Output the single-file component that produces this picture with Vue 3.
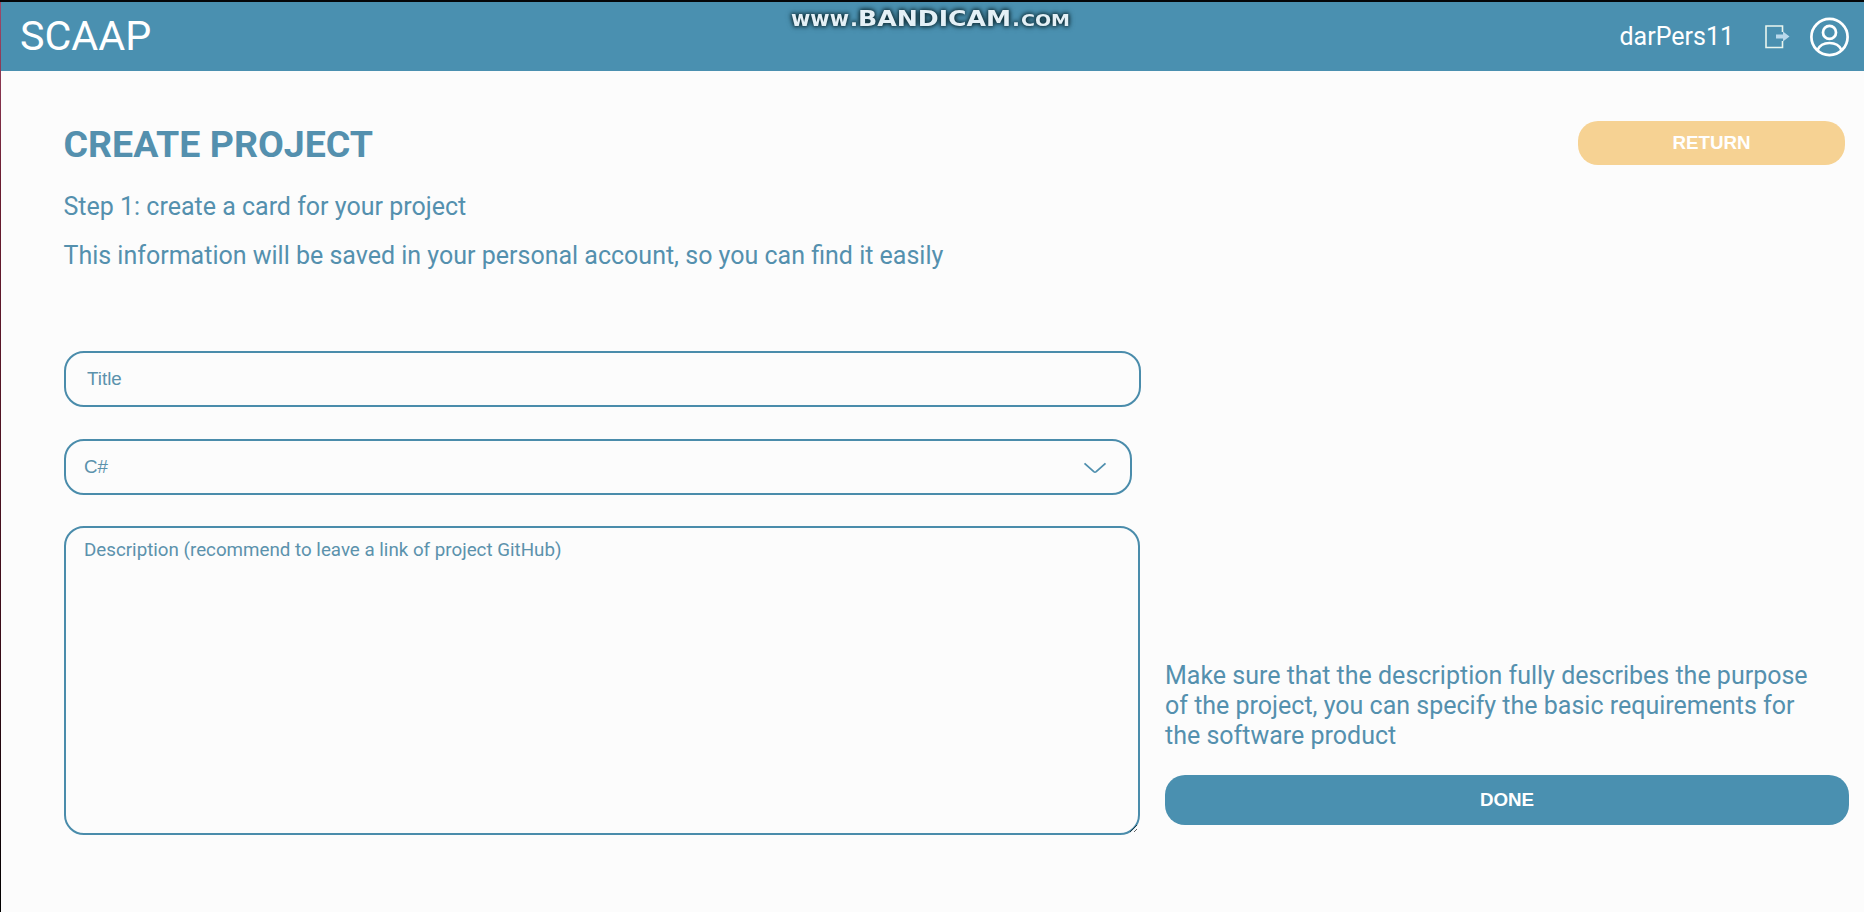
<script setup>
import { ref } from 'vue'

const title = ref('')
const language = ref('C#')
const description = ref('')
</script>

<template>
  <div class="screen">
    <header class="topbar">
      <div class="brand">SCAAP</div>
      <div class="user">
        <span class="username">darPers11</span>
        <svg class="logout" width="26" height="26" viewBox="0 0 26 26" fill="none">
          <path d="M18.500 8V2H2V23.500H18.500V17" stroke="#e9f5ee" stroke-width="1.600" />
          <path d="M12 10.500h7V7.500l6.500 5-6.500 5v-3H12z" fill="#b9d9ec" />
        </svg>
        <svg class="avatar" width="40" height="40" viewBox="0 0 40 40" fill="none" stroke="#fff" stroke-width="2.700">
          <circle cx="19.500" cy="20" r="18.100" />
          <circle cx="19.500" cy="15.400" r="6.500" />
          <path d="M7.500 33C9.500 28.500 14 26 19.500 26s10 2.500 12 7" />
        </svg>
      </div>
    </header>

    <svg class="watermark" width="300" height="34" viewBox="0 0 300 34">
      <g class="mark">
        <text x="10" y="26" font-size="22" textLength="58" lengthAdjust="spacingAndGlyphs">www</text>
        <text x="69" y="26" font-size="20" textLength="8" lengthAdjust="spacingAndGlyphs">.</text>
        <text x="77" y="26" font-size="22" textLength="153" lengthAdjust="spacingAndGlyphs">BANDICAM</text>
        <text x="231" y="26" font-size="20" textLength="8" lengthAdjust="spacingAndGlyphs">.</text>
        <text x="240" y="26" font-size="16" textLength="49" lengthAdjust="spacingAndGlyphs">COM</text>
      </g>
    </svg>

    <main class="content">
      <section class="intro">
        <div class="lead">
          <h1>CREATE PROJECT</h1>
          <p class="step">Step 1: create a card for your project</p>
          <p class="note">This information will be saved in your personal account, so you can find it easily</p>
        </div>
        <button class="return" type="button">RETURN</button>
      </section>

      <form class="form" @submit.prevent>
        <div class="fields">
          <input v-model="title" class="field title" placeholder="Title" />
          <div class="field select">
            <span>{{ language }}</span>
            <svg width="24" height="12" viewBox="0 0 24 12" fill="none" stroke="#4f8fae" stroke-width="1.800">
              <path d="M1.500 1.300 10.800 9.600q1.200 1 2.400 0l9.300-8.300" />
            </svg>
          </div>
          <textarea v-model="description" class="field description" placeholder="Description (recommend to leave a link of project GitHub)"></textarea>
        </div>
        <aside class="side">
          <p>Make sure that the description fully describes the purpose of the project, you can specify the basic requirements for the software product</p>
          <button class="done" type="submit">DONE</button>
        </aside>
      </form>
    </main>
  </div>
</template>

<style>
body {
  margin: 0;
  overflow: hidden;
}
</style>

<style scoped>
.screen {
  position: relative;
  box-sizing: border-box;
  width: 1864px;
  height: 912px;
  padding-left: 1px;
  border-top: 2px solid #050608;
  background: linear-gradient(#a04a6a, #6a1c30 20%, #3a0c18 70%, #000) 0 0 / 1px 100% no-repeat, #fcfcfc;
  color: #5490ae;
  font-family: Roboto, sans-serif;
  overflow: hidden;
}
.topbar {
  box-sizing: border-box;
  height: 69px;
  padding: 0 14px 0 19px;
  display: flex;
  align-items: center;
  justify-content: space-between;
  background: #4a90b0;
  color: #fff;
}
.brand {
  font-size: 41.250px;
  line-height: 48px;
  padding-bottom: 1px;
}
.user {
  display: flex;
  align-items: center;
}
.username {
  font-size: 25px;
  margin-right: 30px;
}
.logout {
  margin-right: 20px;
}
.watermark {
  position: absolute;
  left: 781px;
  top: -2px;
}
.mark {
  font-family: "DejaVu Sans", sans-serif;
  font-weight: bold;
  fill: #e4f0f6;
  filter: drop-shadow(0 0 2px #12343f) drop-shadow(0 0 2px #12343f);
}
.content {
  padding: 0 14px 0 63px;
}
.intro {
  height: 280px;
  display: flex;
  justify-content: space-between;
  align-items: flex-start;
}
.lead {
  margin-left: -0.500px;
}
h1 {
  margin: 51px 0 0;
  font-size: 37.500px;
  line-height: 45px;
  font-weight: 700;
}
p {
  margin: 0;
  font-size: 25px;
  line-height: 30px;
}
.step {
  margin-top: 25px;
}
.note {
  margin-top: 19px;
}
button {
  border: 0;
  padding: 0 0 1px;
  color: #fff;
  font: bold 18.750px "Liberation Sans", Arial, sans-serif;
}
.return {
  width: 267px;
  height: 44px;
  margin: 50px 5px 0 0;
  border-radius: 20px;
  background: #f6d293;
}
.form {
  display: flex;
  gap: 24px;
}
.fields {
  width: 1077px;
  display: flex;
  flex-direction: column;
}
.field {
  box-sizing: border-box;
  border: 2px solid #4a8cab;
  border-radius: 20px;
  background: transparent;
  color: #5b92ac;
  font-family: Roboto, sans-serif;
  font-size: 18.750px;
  outline: none;
}
.field::placeholder {
  color: #5b92ac;
  opacity: 1;
}
.title {
  height: 56px;
  padding: 0 21px;
  font-family: "Liberation Sans", Arial, sans-serif;
}
.select {
  width: 1068px;
  height: 56px;
  margin-top: 32px;
  padding: 0 23px 1px 18px;
  display: flex;
  align-items: center;
  justify-content: space-between;
  font-family: "Liberation Sans", Arial, sans-serif;
}
.select svg {
  margin-top: 2px;
}
.description {
  width: 1076px;
  height: 309px;
  margin-top: 31px;
  padding: 11px 18px;
}
.side {
  width: 684px;
  padding-top: 310px;
}
.side p {
  width: 660px;
}
.done {
  width: 684px;
  height: 50px;
  margin-top: 24px;
  border-radius: 20px;
  background: #4a90b0;
}
</style>
